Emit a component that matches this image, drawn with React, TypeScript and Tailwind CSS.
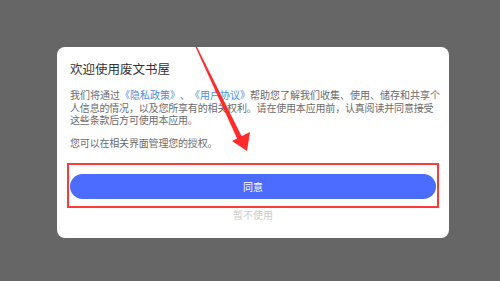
import React from "react";

export default function App() {
  const font = { fontFamily: '"Noto Sans CJK SC", "Noto Sans", sans-serif' };
  return (
    <div className="relative w-[500px] h-[281px] overflow-hidden bg-[#666666]" style={font}>
      <div className="pt-[47px] pl-[57px]">
        <div className="w-[392px] h-[191px] bg-white rounded-[8px] px-[13px] pt-[14px] flex flex-col">
          <div className="text-[12.5px] leading-[16px] text-[#333333]">欢迎使用废文书屋</div>
          <div className="mt-[12px] text-[10px] leading-[12.5px] text-[#6b6b6b] [text-spacing-trim:space-all]">
            <div className="whitespace-nowrap">
              我们将通过<span className="text-[#4a8fe0]">《隐私政策》</span>、<span className="text-[#4a8fe0]">《用户协议》</span>帮助您了解我们收集、使用、储存和共享个
            </div>
            <div className="whitespace-nowrap tracking-[-0.18px]">人信息的情况，以及您所享有的相关权利。请在使用本应用前，认真阅读并同意接受</div>
            <div className="whitespace-nowrap tracking-[-0.18px]">这些条款后方可使用本应用。</div>
            <div className="whitespace-nowrap mt-[10.5px] tracking-[-0.18px]">您可以在相关界面管理您的授权。</div>
          </div>
          <div className="relative mt-[24px]">
            <div className="h-[25px] rounded-full bg-[#4b6cfe] flex items-center justify-center text-white text-[10px]">
              同意
            </div>
            <div className="absolute left-[-3px] right-[-3px] top-[-11px] bottom-[-9px] border-2 border-[#ff3838]" />
          </div>
          <div className="mt-[10px] text-center text-[10px] leading-[12px] text-[#cccccc]">暂不使用</div>
        </div>
      </div>
      <svg className="absolute inset-0" width="500" height="281" viewBox="0 0 500 281">
        <polygon points="195.5,47 197,47 242,137 237.5,139.5" fill="#ff2a2a" />
        <polygon points="247,151 232,141 250,132" fill="#ff2a2a" />
      </svg>
    </div>
  );
}
